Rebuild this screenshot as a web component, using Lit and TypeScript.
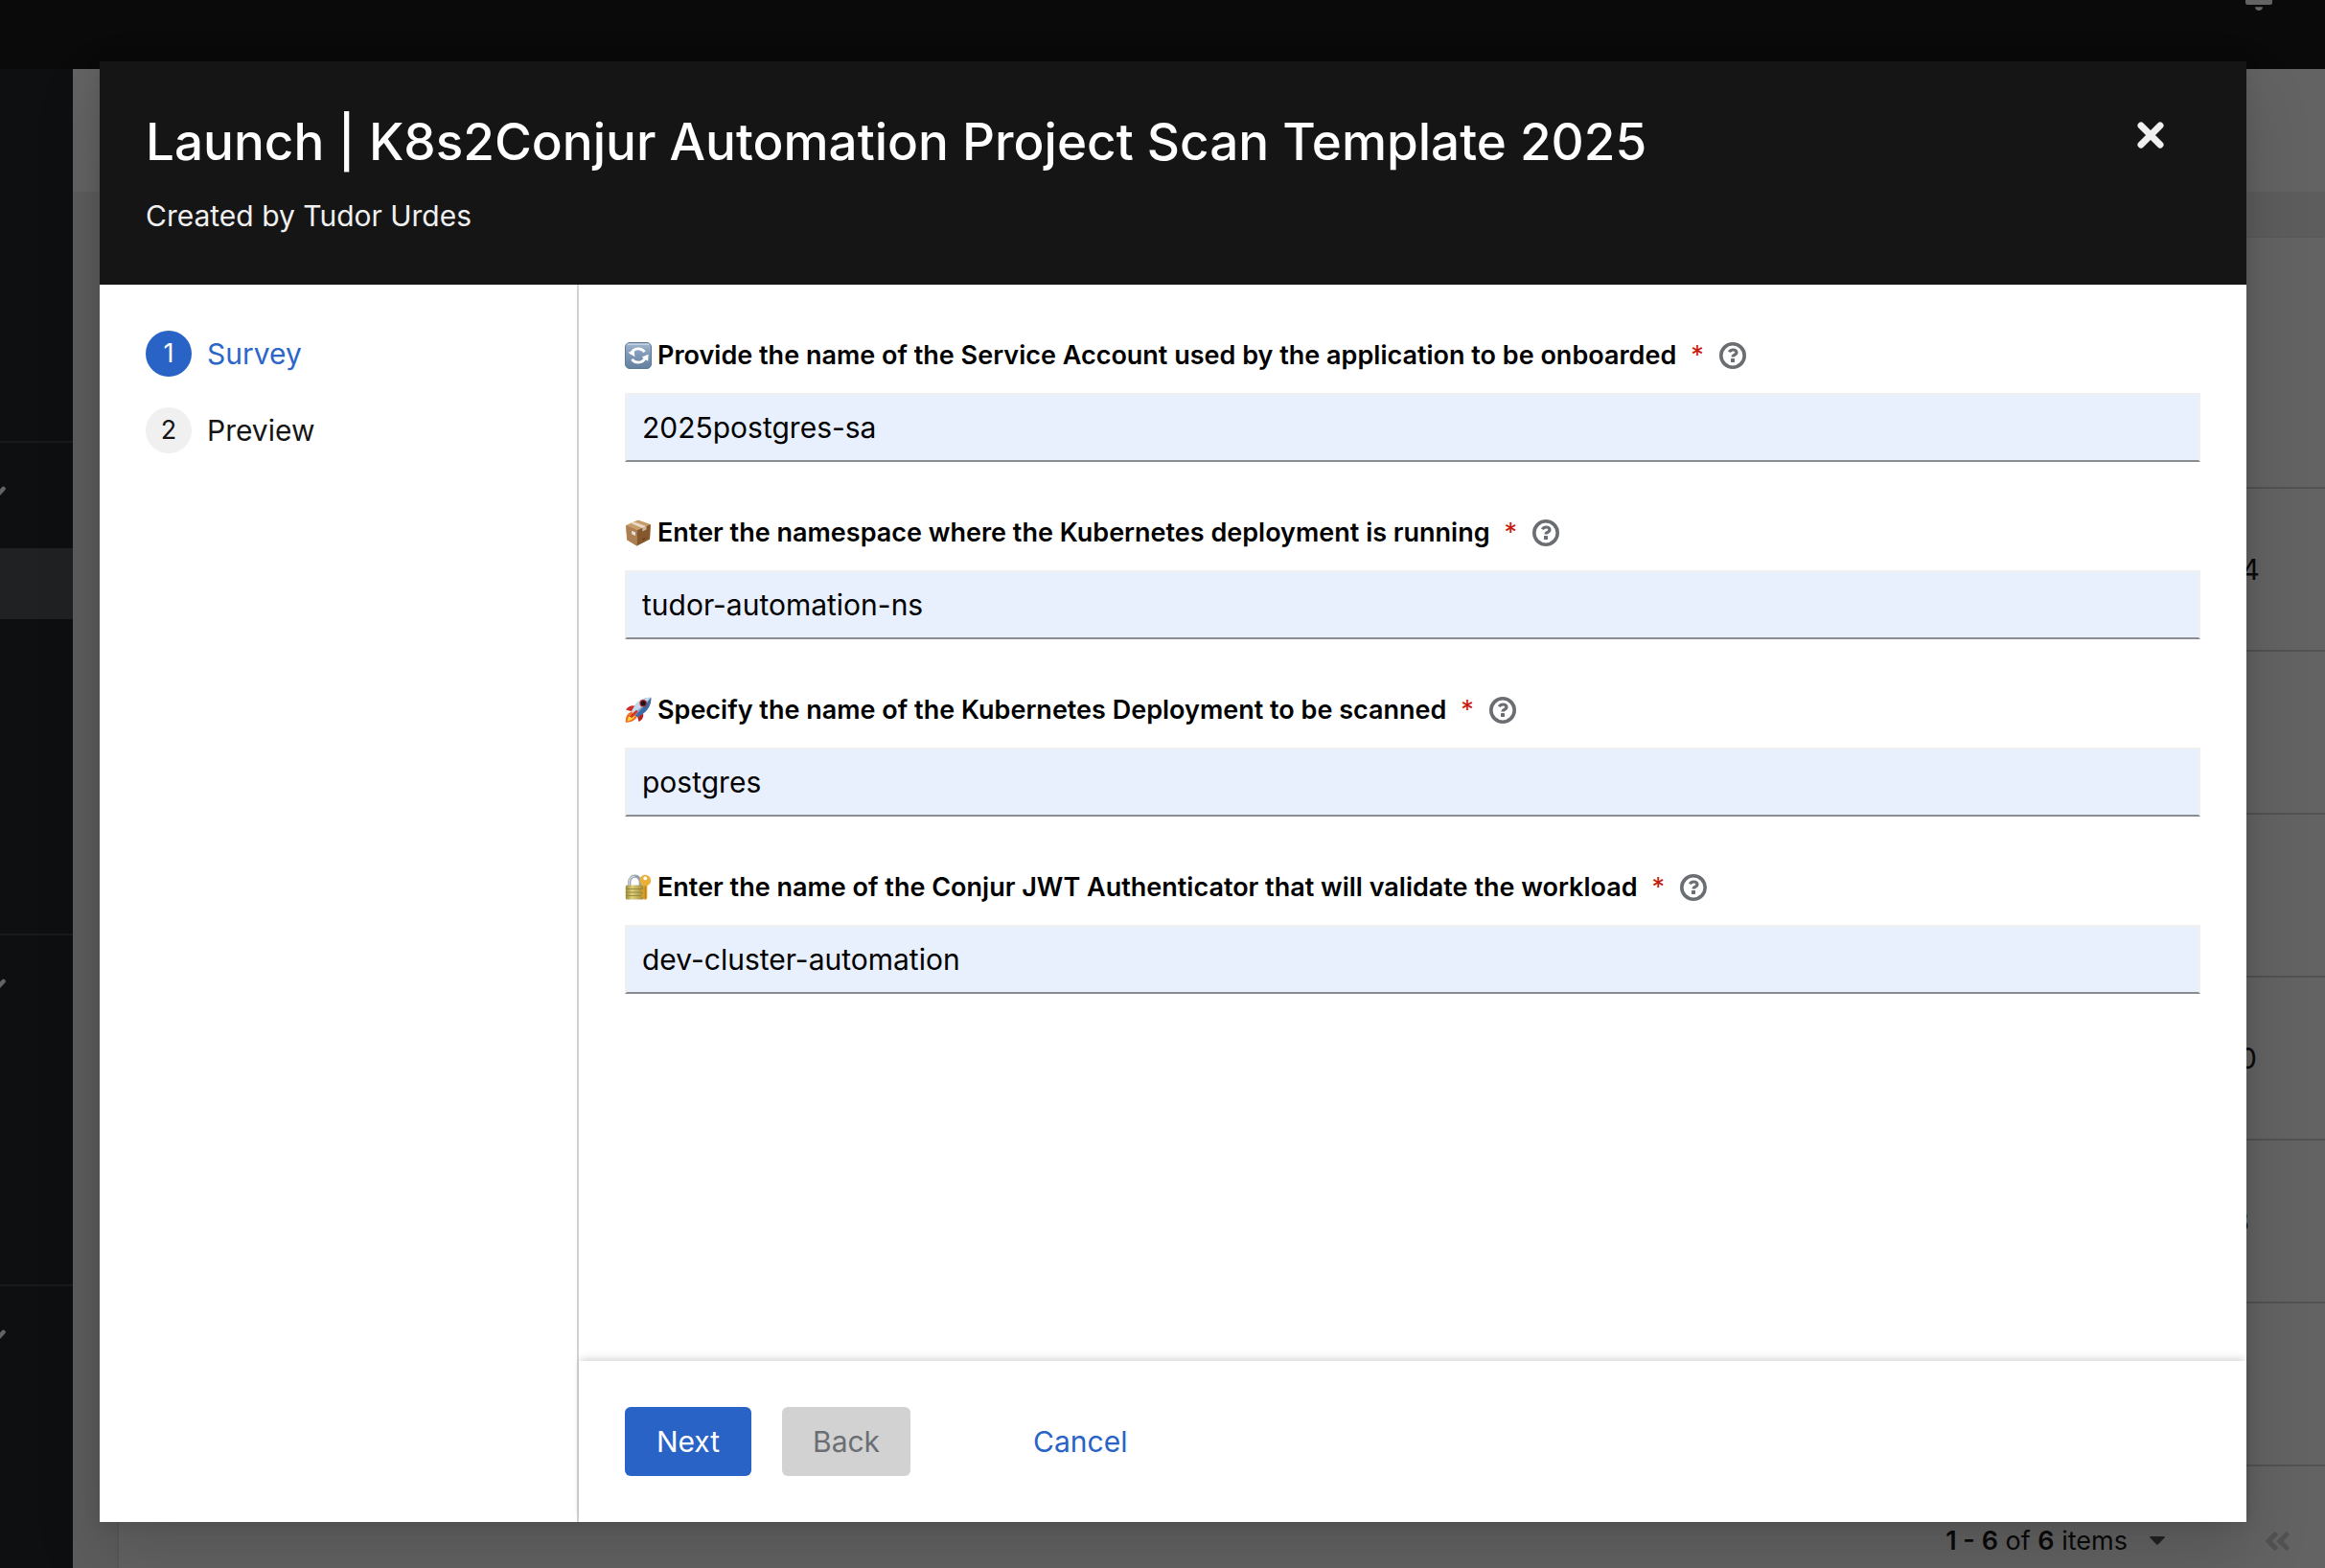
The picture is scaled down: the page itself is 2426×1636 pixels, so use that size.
import { LitElement, html, css, svg, nothing } from "lit";
import type { TemplateResult } from "lit";
import { customElement, property } from "lit/decorators.js";
import { classMap } from "lit/directives/class-map.js";

type IconName = "cycle" | "package" | "rocket" | "lock";

interface Question {
  id: string;
  icon: IconName;
  text: string;
  value: string;
}

const QUESTIONS: Question[] = [
  {
    id: "service-account",
    icon: "cycle",
    text: "Provide the name of the Service Account used by the application to be onboarded",
    value: "2025postgres-sa",
  },
  {
    id: "namespace",
    icon: "package",
    text: "Enter the namespace where the Kubernetes deployment is running",
    value: "tudor-automation-ns",
  },
  {
    id: "deployment",
    icon: "rocket",
    text: "Specify the name of the Kubernetes Deployment to be scanned",
    value: "postgres",
  },
  {
    id: "authenticator",
    icon: "lock",
    text: "Enter the name of the Conjur JWT Authenticator that will validate the workload",
    value: "dev-cluster-automation",
  },
];

const STEPS = ["Survey", "Preview"];

/* Trailing character of each table row and its distance from the right edge. */
const ROWS: { text: string; inset: number }[] = [
  { text: "4", inset: 68 },
  { text: "", inset: 0 },
  { text: "", inset: 0 },
  { text: "0", inset: 71 },
  { text: "8", inset: 79 },
  { text: "", inset: 0 },
];

const PICTOGRAMS: Record<IconName, TemplateResult> = {
  cycle: svg`
    <defs>
      <linearGradient id="c1" x1="0" y1="0" x2="0" y2="1">
        <stop offset="0" stop-color="#a3b8cf" />
        <stop offset="0.45" stop-color="#8099b8" />
        <stop offset="1" stop-color="#64809f" />
      </linearGradient>
    </defs>
    <rect x="0.5" y="0.5" width="27" height="27" rx="4.5" fill="url(#c1)" stroke="#5f7896" />
    <path d="M3 2.2h22" stroke="#d5e0ec" stroke-linecap="round" />
    <path d="M6.4 12.6C7.6 8.8 10.6 6.9 14 6.9c2.8 0 5 1.2 6.6 3.3" fill="none" stroke="#fff" stroke-width="2.8" />
    <path d="M21.6 15.4C20.4 19.2 17.4 21.1 14 21.1c-2.8 0-5-1.2-6.6-3.3" fill="none" stroke="#fff" stroke-width="2.8" />
    <path d="M3.6 8.2l0.7 6.6 6.3-2z" fill="#fff" transform="rotate(180 7 11.500) translate(0 -0.500)" />
    <path d="M24.6 12.800l-0.500 7-6.500-4.300z" fill="#fff" />
  `,
  package: svg`
    <path d="M1.2 6.2L13.8 0.8 26.8 5.2 26 20.5 12.5 27.5 2.2 21.2z" fill="#b08050" />
    <path d="M1.2 6.2L13.8 0.8 26.8 5.2 13 11.2z" fill="#c99c6b" />
    <path d="M13 11.2L26.8 5.2 26 20.5 12.5 27.5z" fill="#84572d" />
    <path d="M1.2 6.2L13 11.2 12.5 27.5 2.2 21.2z" fill="#ad7f52" />
    <path d="M6.2 4L9.8 2.5 22.5 7.2 18.3 9z" fill="#e7d9c5" />
    <path d="M18.3 9L22.5 7.2V10.6L18.3 12.4z" fill="#c9b79d" />
    <path d="M7.2 11.8L11 13.5V17L7.2 15.2z" fill="#e4e6e3" />
    <path d="M17.5 20.8l4.8-2.3-2.4 3z" fill="#5b3a1c" />
  `,
  rocket: svg`
    <path d="M1 13.5C4.5 8.5 8.5 8.5 12 10L8 15.5z" fill="#cf2e28" />
    <path d="M14.5 26C19.5 23.5 20 19.5 18.5 15.5L13 20z" fill="#b9201f" />
    <path d="M7 15.5C3 17 0.5 20.5 0.8 26.8 6.5 26.5 10.5 25 12.5 21z" fill="#f26b21" />
    <path d="M7.8 17.5C5 19 3 21.5 2.5 25.5 6.5 24.5 9 23 10.5 20.5z" fill="#ffd83c" />
    <path d="M27.3 0.7C20.5 0.3 14.5 3.5 10.5 9L6.8 15.3 12.8 21.2 19 17.5C24.5 13.5 27.7 7.5 27.3 0.7z" fill="#7ba3cf" />
    <path d="M27.3 0.7C20.5 0.3 14.5 3.5 10.5 9L6.8 15.3 9.5 18z" fill="#c6d8e9" />
    <path d="M27.3 0.7C27.7 7.5 24.5 13.5 19 17.5L12.8 21.2 11 19.5 22 8z" fill="#3c6ca3" />
    <circle cx="19.2" cy="6.8" r="3.8" fill="#a6262a" />
    <circle cx="19.2" cy="6.8" r="2.5" fill="#15161a" />
    <path d="M4.5 20.5L12 13.8 13.8 15.5 7.5 22z" fill="#d8342b" />
  `,
  lock: svg`
    <defs>
      <linearGradient id="l1" x1="0" y1="0" x2="1" y2="0">
        <stop offset="0" stop-color="#9b8b3a" />
        <stop offset="0.35" stop-color="#dccf7c" />
        <stop offset="1" stop-color="#a08a33" />
      </linearGradient>
    </defs>
    <path d="M4.7 13V8.5a5.8 6.3 0 0 1 11.6 0V13" fill="none" stroke="#94a0ad" stroke-width="3.2" />
    <path d="M4.4 13V8.5a6 6.4 0 0 1 6-6.4" fill="none" stroke="#d4dbe2" stroke-width="1.2" />
    <rect x="0.8" y="11.5" width="19" height="15" rx="1.5" fill="url(#l1)" />
    <path d="M1 15.5h18.6M1 19h18.6M1 22.5h18.6" stroke="#8f8036" stroke-width="0.8" />
    <path d="M19.3 11h4v14.2l-2 1.8-2-1.8z" fill="#dd9e24" />
    <path d="M17.5 16h2v3h-2zM17.5 21h2v3h-2z" fill="#dd9e24" />
    <circle cx="21.3" cy="6.7" r="5.9" fill="#eab03a" />
    <path d="M21.3 12.6v13" stroke="#b97a14" />
    <circle cx="21.3" cy="4.4" r="1.9" fill="#fff" />
  `,
};

@customElement("survey-field")
export class SurveyField extends LitElement {
  @property({ attribute: false }) question!: Question;

  static styles = css`
    :host {
      display: grid;
      gap: 13px;
    }
    .head {
      display: flex;
      align-items: center;
      gap: 16px;
      min-height: 52px;
    }
    .label {
      display: flex;
      align-items: center;
      gap: 6px;
      font-size: 27px;
      font-weight: 600;
      line-height: 36px;
      color: #000;
    }
    .pictogram {
      flex: none;
      width: 28px;
      height: 28px;
    }
    .required {
      margin-left: 9px;
      font-weight: 400;
      color: #c9190b;
    }
    .help {
      display: flex;
      padding: 0;
      border: 0;
      background: none;
      color: #6a6e73;
      cursor: pointer;
    }
    .help-icon {
      width: 28px;
      height: 28px;
    }
    .input {
      box-sizing: border-box;
      width: 100%;
      height: 72px;
      padding: 0 16px;
      border: 2px solid #f0f0f0;
      border-bottom-color: #8a8d90;
      border-radius: 0;
      outline: none;
      background: #e8effd;
      color: #000;
      font: inherit;
    }
  `;

  render() {
    const q = this.question;
    return html`
      <div class="head">
        <label class="label" for=${q.id}>
          <svg class="pictogram" viewBox="0 0 28 28" aria-hidden="true">${PICTOGRAMS[q.icon]}</svg>
          <span>${q.text}</span>
          <span class="required" aria-hidden="true">*</span>
        </label>
        <button class="help" type="button" aria-label="Help">
          <svg class="help-icon" viewBox="0 0 28 28" fill="none" stroke="currentColor">
            <circle cx="14" cy="14" r="12.2" stroke-width="3.6" />
            <path d="M10.3 10.3C11.3 8.6 12.6 8 14.2 8 16.4 8 18 9.2 18 11 18 13.5 14 13 14 15.4" stroke-width="3.2" />
            <rect x="12" y="16.9" width="4" height="4" rx="0.5" fill="currentColor" stroke="none" />
          </svg>
        </button>
      </div>
      <input class="input" id=${q.id} type="text" required .value=${q.value} />
    `;
  }
}

@customElement("launch-wizard")
export class LaunchWizard extends LitElement {
  static styles = css`
    :host {
      display: flex;
      flex-direction: column;
      flex: 1;
      min-width: 0;
      background: #fff;
      color: #151515;
      box-shadow: 0 32px 64px 0 rgba(3, 3, 3, 0.16), 0 0 16px 0 rgba(3, 3, 3, 0.1);
    }
    .header {
      display: flex;
      align-items: flex-start;
      justify-content: space-between;
      padding: 48px 64px 48px 48px;
      background: #151515;
      color: #fff;
    }
    .titles {
      display: grid;
      gap: 16px;
    }
    .title {
      margin: 0;
      font-size: 53px;
      font-weight: 500;
      line-height: 73px;
    }
    .subtitle {
      margin: 0;
      color: #f0f0f0;
      line-height: 48px;
    }
    .close {
      display: grid;
      place-items: center;
      width: 72px;
      height: 58px;
      padding: 0;
      border: 0;
      background: none;
      color: #f0f0f0;
      cursor: pointer;
    }
    .close-icon {
      width: 28px;
      height: 28px;
    }
    .columns {
      display: flex;
      flex: 1;
      min-height: 0;
    }
    .nav {
      box-sizing: border-box;
      flex: none;
      width: 500px;
      padding: 48px;
      border-right: 2px solid #d2d2d2;
    }
    .steps {
      display: grid;
      gap: 32px;
      margin: 0;
      padding: 0;
      list-style: none;
    }
    .step {
      display: flex;
      align-items: center;
      gap: 16px;
      padding: 0;
      border: 0;
      background: none;
      color: #151515;
      font: inherit;
      line-height: 48px;
      cursor: pointer;
    }
    .step-number {
      width: 48px;
      height: 48px;
      border-radius: 50%;
      background: #f0f0f0;
      font-size: 27px;
      text-align: center;
    }
    .step.current {
      color: #2b66c8;
    }
    .step.current .step-number {
      background: #2863c5;
      color: #fff;
    }
    .main {
      display: flex;
      flex-direction: column;
      flex: 1;
      min-width: 0;
    }
    .form {
      display: grid;
      align-content: start;
      gap: 48px;
      flex: 1;
      padding: 48px;
    }
    .footer {
      display: flex;
      gap: 32px;
      padding: 48px;
      background: #fff;
      box-shadow: 0 -4px 8px -2px rgba(3, 3, 3, 0.18);
    }
    .button {
      min-width: 132px;
      height: 72px;
      padding: 0 32px;
      border: 0;
      border-radius: 6px;
      font: inherit;
      cursor: pointer;
    }
    .primary {
      background: #2863c5;
      color: #fff;
    }
    .secondary {
      background: #d2d2d2;
      color: #6a6e73;
    }
    .plain {
      margin-left: 64px;
      background: none;
      color: #2863c5;
    }
  `;

  render() {
    return html`
      <header class="header">
        <div class="titles">
          <h1 class="title">Launch | K8s2Conjur Automation Project Scan Template 2025</h1>
          <p class="subtitle">Created by Tudor Urdes</p>
        </div>
        <button class="close" type="button" aria-label="Close">
          <svg class="close-icon" viewBox="0 0 28 28" stroke="currentColor" stroke-width="7" stroke-linecap="round">
            <path d="M4 4L24 24M24 4L4 24" />
          </svg>
        </button>
      </header>
      <div class="columns">
        <nav class="nav">
          <ol class="steps">
            ${STEPS.map(
              (name, i) => html`<li>
                <button
                  type="button"
                  class=${classMap({ step: true, current: i === 0 })}
                  aria-current=${i === 0 ? "step" : nothing}
                >
                  <span class="step-number">${i + 1}</span>
                  <span>${name}</span>
                </button>
              </li>`,
            )}
          </ol>
        </nav>
        <div class="main">
          <div class="form">
            ${QUESTIONS.map((q) => html`<survey-field .question=${q}></survey-field>`)}
          </div>
          <footer class="footer">
            <button class="button primary" type="button">Next</button>
            <button class="button secondary" type="button" disabled>Back</button>
            <button class="button plain" type="button">Cancel</button>
          </footer>
        </div>
      </div>
    `;
  }
}

@customElement("console-page")
export class ConsolePage extends LitElement {
  static styles = css`
    :host {
      display: flex;
      flex-direction: column;
      height: 100%;
      background: #f0f0f0;
      color: #151515;
    }
    .topbar {
      display: flex;
      justify-content: flex-end;
      align-items: flex-start;
      flex: none;
      height: 72px;
      padding-right: 55px;
      box-sizing: border-box;
      background: #151515;
    }
    .bell {
      width: 28px;
      height: 12px;
      fill: #fff;
    }
    .body {
      display: flex;
      flex: 1;
      min-height: 0;
      overflow: hidden;
    }
    .sidebar {
      flex: none;
      width: 76px;
      background: #212427;
    }
    .group {
      box-sizing: border-box;
      border-bottom: 2px solid #3c3f42;
    }
    .group.first {
      height: 390px;
    }
    .group.second {
      height: 514px;
    }
    .group.third {
      height: 366px;
    }
    .group.last {
      border-bottom: 0;
    }
    .group-head {
      box-sizing: border-box;
      height: 110px;
      padding-top: 44px;
    }
    .chevron {
      display: block;
      width: 8px;
      height: 16px;
      stroke: #fff;
    }
    .selected {
      height: 74px;
      background: #4f5255;
    }
    .content {
      display: flex;
      flex-direction: column;
      flex: 1;
      min-width: 0;
    }
    .banner {
      flex: none;
      height: 128px;
      background: #fff;
    }
    .area {
      flex: 1;
      padding: 48px 0 0 48px;
    }
    .card {
      background: #fff;
      box-shadow: 0 2px 4px 0 rgba(3, 3, 3, 0.12), 0 0 4px 0 rgba(3, 3, 3, 0.06);
    }
    .toolbar {
      box-sizing: border-box;
      height: 262px;
      border-bottom: 2px solid #d2d2d2;
    }
    .table {
      width: 100%;
      border-collapse: separate;
      border-spacing: 0;
    }
    .cell {
      box-sizing: border-box;
      height: 170px;
      padding: 0;
      border-bottom: 2px solid #d2d2d2;
      text-align: right;
    }
    .pager {
      display: flex;
      align-items: center;
      justify-content: flex-end;
      gap: 105px;
      height: 155px;
      padding-right: 37px;
    }
    .range {
      display: flex;
      align-items: center;
      gap: 23px;
      padding: 0;
      border: 0;
      background: none;
      color: inherit;
      font: inherit;
      font-size: 27px;
    }
    .range b {
      font-weight: 600;
    }
    .range-caret {
      width: 16px;
      height: 9px;
      fill: #4f5255;
    }
    .first-page {
      display: flex;
      padding: 0;
      border: 0;
      background: none;
    }
    .first-page-icon {
      width: 25px;
      height: 20px;
      fill: none;
      stroke: #d2d2d2;
    }
  `;

  private chevron() {
    return html`<div class="group-head">
      <svg class="chevron" viewBox="0 0 8 16" fill="none" stroke-width="4.5" stroke-linecap="round">
        <path d="M3.5 4L-6 14" />
      </svg>
    </div>`;
  }

  render() {
    return html`
      <header class="topbar">
        <svg class="bell" viewBox="0 0 28 12" aria-hidden="true">
          <path d="M0 0H28V2.5Q28 5 25.5 5H2.5Q0 5 0 2.5z" />
          <path d="M10 7.2H18Q17.6 11 14 11 10.4 11 10 7.2z" />
        </svg>
      </header>
      <div class="body">
        <aside class="sidebar">
          <div class="group first"></div>
          <div class="group second">
            ${this.chevron()}
            <div class="selected"></div>
          </div>
          <div class="group third">${this.chevron()}</div>
          <div class="group last">${this.chevron()}</div>
        </aside>
        <div class="content">
          <div class="banner"></div>
          <div class="area">
            <div class="card">
              <div class="toolbar"></div>
              <table class="table">
                <tbody>
                  ${ROWS.map(
                    (r) => html`<tr>
                      <td class="cell" style="padding-right:${r.inset}px">${r.text}</td>
                    </tr>`,
                  )}
                </tbody>
              </table>
              <div class="pager">
                <button class="range" type="button">
                  <span><b>1 - 6</b> of <b>6</b> items</span>
                  <svg class="range-caret" viewBox="0 0 16 9"><path d="M1 0H15Q16.5 0 15.5 1.5L9 8.3Q8 9.2 7 8.3L0.5 1.5Q-0.5 0 1 0z" /></svg>
                </button>
                <button class="first-page" type="button" disabled aria-label="First page">
                  <svg class="first-page-icon" viewBox="0 0 25 20" stroke-width="5">
                    <path d="M11.5 1.5L3 10L11.5 18.5M23.5 1.5L15 10L23.5 18.5" />
                  </svg>
                </button>
              </div>
            </div>
          </div>
        </div>
      </div>
    `;
  }
}

@customElement("app-root")
export class AppRoot extends LitElement {
  static styles = css`
    :host {
      display: grid;
      height: 100vh;
      overflow: hidden;
      font-family: Inter, "Open Sans", sans-serif;
      font-size: 30px;
      line-height: 48px;
    }
    .page,
    .backdrop {
      grid-area: 1 / 1;
      min-width: 0;
      min-height: 0;
    }
    .page {
      overflow: hidden;
    }
    .backdrop {
      display: flex;
      z-index: 1;
      padding: 64px 82px 48px 104px;
      background: rgba(3, 3, 3, 0.62);
    }
  `;

  render() {
    return html`
      <div class="page" inert><console-page></console-page></div>
      <div class="backdrop">
        <launch-wizard role="dialog" aria-modal="true"></launch-wizard>
      </div>
    `;
  }
}
